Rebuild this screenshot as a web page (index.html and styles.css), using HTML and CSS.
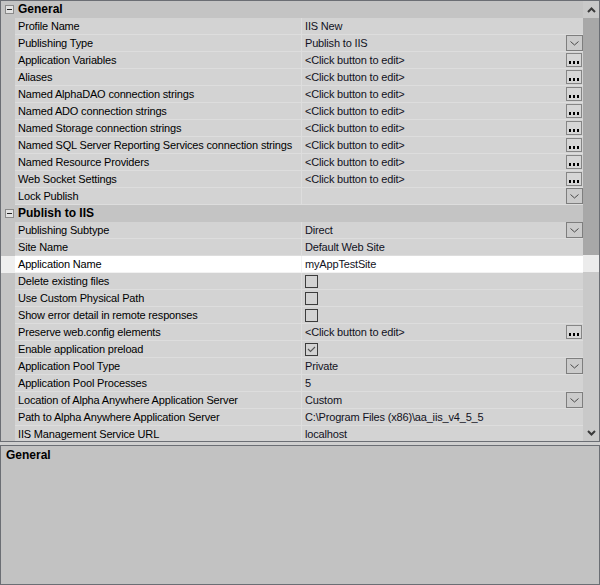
FILE: index.html
```html
<!DOCTYPE html>
<html lang="en">
<head>
    <meta charset="UTF-8">
    <meta name="viewport" content="width=device-width, initial-scale=1.0">
    <title>Publishing Profile</title>
    <link rel="stylesheet" href="styles.css">
</head>
<body>
    <div class="grid">
        <div class="rows">
            <div class="cat"><span class="gutter"><span class="toggle"></span></span><span class="cat-label">General</span></div>
            <div class="row"><span class="gutter"></span><span class="name">Profile Name</span><span class="value"><span class="text">IIS New</span></span></div>
            <div class="row"><span class="gutter"></span><span class="name">Publishing Type</span><span class="value"><span class="text">Publish to IIS</span><span class="drop"><svg width="9" height="5" viewBox="0 0 9 5"><polyline points="0.5,0.5 4.5,4 8.5,0.5"/></svg></span></span></div>
            <div class="row"><span class="gutter"></span><span class="name">Application Variables</span><span class="value"><span class="text">&lt;Click button to edit&gt;</span><span class="dots"><i></i><i></i><i></i></span></span></div>
            <div class="row"><span class="gutter"></span><span class="name">Aliases</span><span class="value"><span class="text">&lt;Click button to edit&gt;</span><span class="dots"><i></i><i></i><i></i></span></span></div>
            <div class="row"><span class="gutter"></span><span class="name">Named AlphaDAO connection strings</span><span class="value"><span class="text">&lt;Click button to edit&gt;</span><span class="dots"><i></i><i></i><i></i></span></span></div>
            <div class="row"><span class="gutter"></span><span class="name">Named ADO connection strings</span><span class="value"><span class="text">&lt;Click button to edit&gt;</span><span class="dots"><i></i><i></i><i></i></span></span></div>
            <div class="row"><span class="gutter"></span><span class="name">Named Storage connection strings</span><span class="value"><span class="text">&lt;Click button to edit&gt;</span><span class="dots"><i></i><i></i><i></i></span></span></div>
            <div class="row"><span class="gutter"></span><span class="name">Named SQL Server Reporting Services connection strings</span><span class="value"><span class="text">&lt;Click button to edit&gt;</span><span class="dots"><i></i><i></i><i></i></span></span></div>
            <div class="row"><span class="gutter"></span><span class="name">Named Resource Providers</span><span class="value"><span class="text">&lt;Click button to edit&gt;</span><span class="dots"><i></i><i></i><i></i></span></span></div>
            <div class="row"><span class="gutter"></span><span class="name">Web Socket Settings</span><span class="value"><span class="text">&lt;Click button to edit&gt;</span><span class="dots"><i></i><i></i><i></i></span></span></div>
            <div class="row"><span class="gutter"></span><span class="name">Lock Publish</span><span class="value"><span class="text"></span><span class="drop"><svg width="9" height="5" viewBox="0 0 9 5"><polyline points="0.5,0.5 4.5,4 8.5,0.5"/></svg></span></span></div>

            <div class="cat"><span class="gutter"><span class="toggle"></span></span><span class="cat-label">Publish to IIS</span></div>
            <div class="row"><span class="gutter"></span><span class="name">Publishing Subtype</span><span class="value"><span class="text">Direct</span><span class="drop"><svg width="9" height="5" viewBox="0 0 9 5"><polyline points="0.5,0.5 4.5,4 8.5,0.5"/></svg></span></span></div>
            <div class="row"><span class="gutter"></span><span class="name">Site Name</span><span class="value"><span class="text">Default Web Site</span></span></div>
            <div class="row selected"><span class="gutter"></span><span class="name">Application Name</span><span class="value"><span class="text">myAppTestSite</span></span></div>
            <div class="row"><span class="gutter"></span><span class="name">Delete existing files</span><span class="value"><span class="check"></span></span></div>
            <div class="row"><span class="gutter"></span><span class="name">Use Custom Physical Path</span><span class="value"><span class="check"></span></span></div>
            <div class="row"><span class="gutter"></span><span class="name">Show error detail in remote responses</span><span class="value"><span class="check"></span></span></div>
            <div class="row"><span class="gutter"></span><span class="name">Preserve web.config elements</span><span class="value"><span class="text">&lt;Click button to edit&gt;</span><span class="dots"><i></i><i></i><i></i></span></span></div>
            <div class="row"><span class="gutter"></span><span class="name">Enable application preload</span><span class="value"><span class="check"><svg width="11" height="11" viewBox="0 0 11 11"><polyline points="2,5 4.5,7.5 9,3"/></svg></span></span></div>
            <div class="row"><span class="gutter"></span><span class="name">Application Pool Type</span><span class="value"><span class="text">Private</span><span class="drop"><svg width="9" height="5" viewBox="0 0 9 5"><polyline points="0.5,0.5 4.5,4 8.5,0.5"/></svg></span></span></div>
            <div class="row"><span class="gutter"></span><span class="name">Application Pool Processes</span><span class="value"><span class="text">5</span></span></div>
            <div class="row"><span class="gutter"></span><span class="name">Location of Alpha Anywhere Application Server</span><span class="value"><span class="text">Custom</span><span class="drop"><svg width="9" height="5" viewBox="0 0 9 5"><polyline points="0.5,0.5 4.5,4 8.5,0.5"/></svg></span></span></div>
            <div class="row"><span class="gutter"></span><span class="name">Path to Alpha Anywhere Application Server</span><span class="value"><span class="text">C:\Program Files (x86)\aa_iis_v4_5_5</span></span></div>
            <div class="row"><span class="gutter"></span><span class="name">IIS Management Service URL</span><span class="value"><span class="text">localhost</span></span></div>
        </div>

        <div class="scrollbar">
            <div class="arrow"><svg width="9" height="6" viewBox="0 0 9 6"><polyline points="1,5 4.5,1.5 8,5"/></svg></div>
            <div class="thumb"></div>
            <div class="track lit"></div>
            <div class="track"></div>
            <div class="arrow"><svg width="9" height="6" viewBox="0 0 9 6"><polyline points="1,1 4.5,4.5 8,1"/></svg></div>
        </div>
    </div>

    <div class="desc">
        <div class="desc-title">General</div>
    </div>
</body>
</html>
```

FILE: styles.css
```css
body {
    margin: 0;
    background: #cfcfcf;
    font-family: "Liberation Sans", Arial, sans-serif;
    font-size: 11px;
    color: #000;
}
.grid {
    display: flex;
    height: 440px;
    border: 1px solid #6b6e74;
    background: #d3d3d3;
}
.rows {
    flex: 1;
    overflow: hidden;
}
.row,
.cat {
    display: flex;
    height: 17px;
}
.gutter {
    width: 14px;
    flex: none;
    background: #c4c4c4;
    display: flex;
    align-items: center;
    justify-content: center;
}
.name {
    width: 283px;
    padding-left: 3px;
    line-height: 16px;
    letter-spacing: -0.17px;
    border-right: 1px solid #dddddd;
    border-bottom: 1px solid #dddddd;
    white-space: nowrap;
    overflow: hidden;
}
.value {
    flex: 1;
    display: flex;
    align-items: center;
    padding-left: 3px;
    height: 16px;
    border-bottom: 1px solid #dddddd;
    color: #111122;
    letter-spacing: -0.17px;
}
.value .text {
    flex: 1;
    white-space: nowrap;
}
.cat {
    background: #c4c4c4;
}
.cat-label {
    padding-left: 3px;
    font-weight: bold;
    font-size: 12px;
    line-height: 16px;
}
.toggle {
    position: relative;
    width: 7px;
    height: 7px;
    border: 1px solid #8a8a8a;
    background: #e2e2e2;
    margin-left: 3px;
}
.toggle::after {
    content: "";
    position: absolute;
    left: 1px;
    top: 3px;
    width: 5px;
    height: 1px;
    background: #222;
}
.selected .name,
.selected .value {
    background: #fff;
    border-color: #f2f2f2;
}
.selected .gutter {
    background: #efefef;
}
.drop {
    width: 15px;
    height: 14px;
    border: 1px solid #7e7e7e;
    background: #cbcbcb;
    display: flex;
    align-items: center;
    justify-content: center;
}
.drop svg {
    fill: none;
    stroke: #4a4a4a;
    stroke-width: 1;
}
.dots {
    width: 16px;
    height: 14px;
    margin-right: 1px;
    border: 1px solid #858585;
    background: #d6d6d6;
    display: flex;
    align-items: flex-end;
    justify-content: center;
    gap: 2px;
    padding-bottom: 2px;
    box-sizing: border-box;
}
.dots i {
    width: 2px;
    height: 3px;
    background: #000;
}
.check {
    width: 11px;
    height: 11px;
    border: 1px solid #3c3c3c;
    display: flex;
}
.check svg {
    fill: none;
    stroke: #555;
    stroke-width: 1.1;
}
.scrollbar {
    width: 16px;
    display: flex;
    flex-direction: column;
    background: #c9c9c9;
}
.arrow {
    height: 17px;
    display: flex;
    align-items: center;
    justify-content: center;
}
.arrow svg {
    fill: none;
    stroke: #3a3a3a;
    stroke-width: 2;
}
.thumb {
    height: 237px;
    background: #a8a8a8;
}
.track.lit {
    height: 17px;
    flex: none;
    background: #ececec;
}
.track {
    flex: 1;
}
.desc {
    margin-top: 3px;
    height: 138px;
    border: 1px solid #6b6e74;
    background: #c2c2c2;
}
.desc-title {
    padding: 2px 5px;
    font-weight: bold;
    font-size: 12px;
}
```
